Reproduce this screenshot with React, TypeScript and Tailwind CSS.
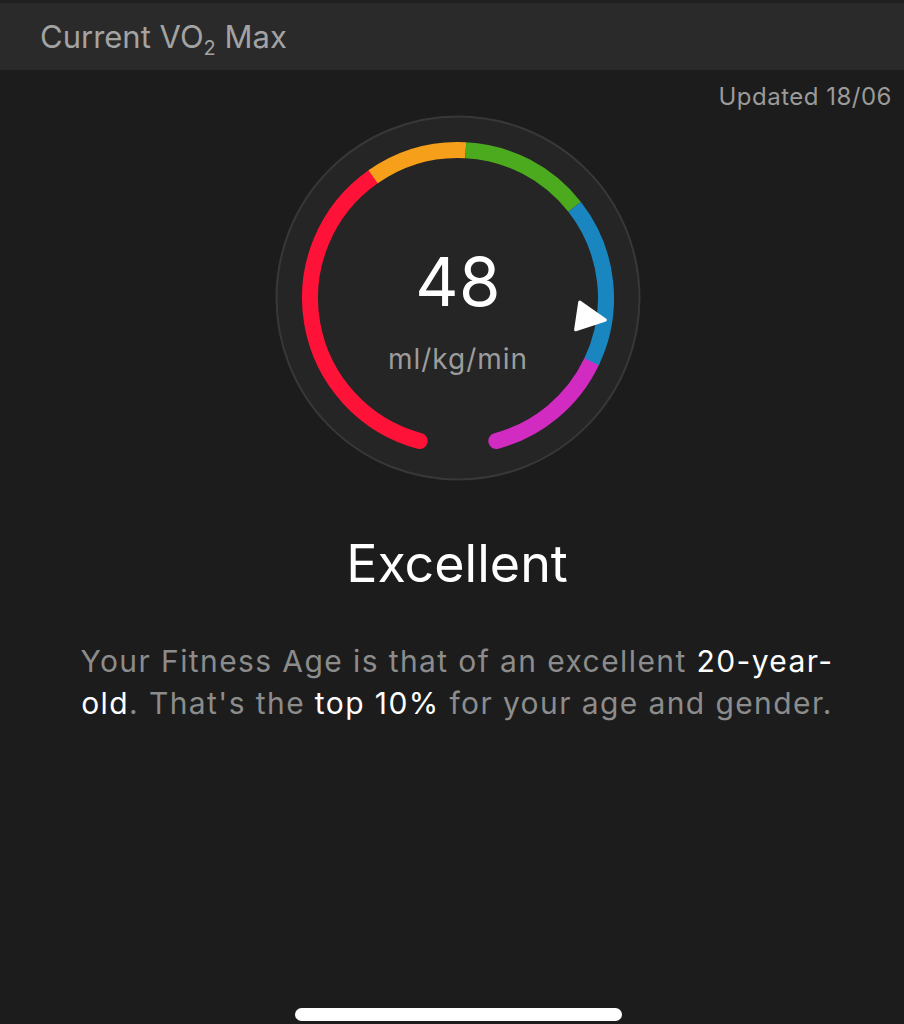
import React from "react";

const CX = 183;
const CY = 183;
const R = 148;

function pt(deg: number, r: number = R) {
  const a = (deg * Math.PI) / 180;
  return [CX + r * Math.sin(a), CY - r * Math.cos(a)];
}

function arc(from: number, to: number) {
  const [x1, y1] = pt(from);
  const [x2, y2] = pt(to);
  const large = to - from > 180 ? 1 : 0;
  return `M ${x1.toFixed(2)} ${y1.toFixed(2)} A ${R} ${R} 0 ${large} 1 ${x2.toFixed(2)} ${y2.toFixed(2)}`;
}

function Gauge() {
  const arrowAngle = 98.5;
  return (
    <div className="relative w-[366px] h-[366px]">
      <svg width="366" height="366" viewBox="0 0 366 366" className="absolute inset-0">
        <circle cx={CX} cy={CY} r={181.5} fill="#252525" stroke="#383838" strokeWidth="2" />
        <path d={arc(-165, -35)} stroke="#ff1238" strokeWidth="16" fill="none" strokeLinecap="round" />
        <path d={arc(115.5, 165)} stroke="#d12bc2" strokeWidth="16" fill="none" strokeLinecap="round" />
        <path d={arc(-35, 3)} stroke="#f59f1b" strokeWidth="16" fill="none" strokeLinecap="butt" />
        <path d={arc(3, 52)} stroke="#4caa1f" strokeWidth="16" fill="none" strokeLinecap="butt" />
        <path d={arc(52, 115.5)} stroke="#1a86c0" strokeWidth="16" fill="none" strokeLinecap="butt" />
        <g transform={`translate(${CX} ${CY}) rotate(${arrowAngle - 90})`}>
          <polygon
            points="149,0 121,-14 121,14"
            fill="#ffffff"
            stroke="#ffffff"
            strokeWidth="3"
            strokeLinejoin="round"
          />
        </g>
      </svg>
      <div className="absolute inset-0 flex flex-col items-center">
        <div className="mt-[133px] text-[67px] leading-none text-white tracking-[0.5px]">48</div>
        <div className="mt-[30px] text-[28px] leading-none text-[#9c9c9c] tracking-[1px]">ml/kg/min</div>
      </div>
    </div>
  );
}

export default function App() {
  return (
    <div className="w-full h-[1024px] bg-[#1c1c1c] flex flex-col font-['Inter',sans-serif] overflow-hidden">
      <div className="h-[70px] bg-[#2a2a2a] border-t-[3px] border-[#1f1f1f] flex items-center pl-[40px]">
        <span className="text-[31px] text-[#a3a3a3] leading-none">
          Current VO<span className="text-[20px] relative top-[7px]">2</span> Max
        </span>
      </div>
      <div className="flex justify-end pr-[12px] pt-[15px]">
        <span className="text-[24px] leading-none text-[#9a9a9a] tracking-[0.5px]">Updated 18/06</span>
      </div>
      <div className="flex justify-center mt-[6px] pl-[12px]">
        <Gauge />
      </div>
      <div className="flex justify-center mt-[57px] pl-[10px]">
        <span className="text-[52px] leading-none text-white">Excellent</span>
      </div>
      <div className="mt-[50px] pl-[10px] text-center text-[30px] leading-[42px] text-[#8c8c8c] tracking-[1.4px] whitespace-nowrap">
        Your Fitness Age is that of an excellent <span className="text-white">20-year-</span>
        <br />
        <span className="text-white">old</span>. That's the <span className="text-white">top 10%</span> for your age and gender.
      </div>
      <div className="flex-1" />
      <div className="flex justify-center pb-[3px] pl-[12px]">
        <div className="w-[327px] h-[13px] rounded-full bg-white" />
      </div>
    </div>
  );
}
